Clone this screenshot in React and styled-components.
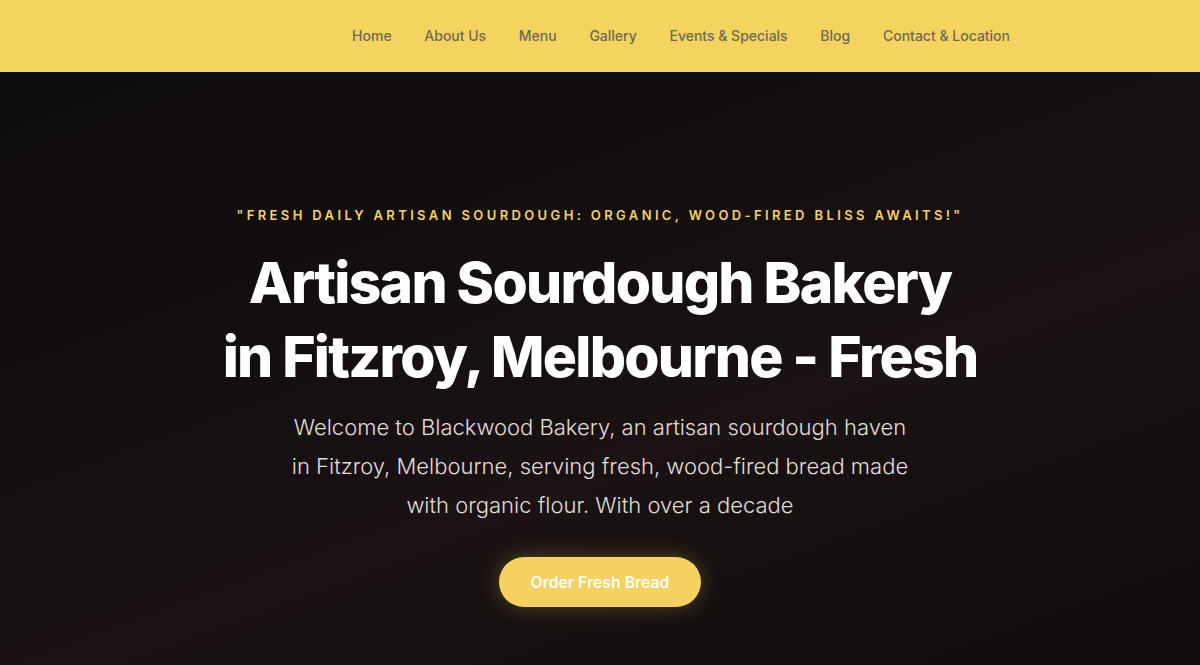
import React from 'react';
import styled, { createGlobalStyle } from 'styled-components';

const GlobalStyle = createGlobalStyle`
  * {
    box-sizing: border-box;
  }
  body {
    margin: 0;
    font-family: Inter, 'Noto Sans', sans-serif;
    background-color: #110d0d;
    -webkit-font-smoothing: antialiased;
  }
`;

const Header = styled.header`
  display: flex;
  justify-content: flex-end;
  align-items: center;
  height: 72px;
  padding-right: 190px;
  padding-bottom: 2px;
  background-color: #f5d35f;
`;

const Nav = styled.nav`
  display: flex;
  align-items: center;
  gap: 32.7px;
`;

const NavLink = styled.a`
  font-size: 14px;
  font-weight: 500;
  color: #6f6a55;
  text-decoration: none;
  cursor: pointer;
  &:hover {
    color: #2b2a25;
  }
`;

const Hero = styled.section`
  display: flex;
  flex-direction: column;
  align-items: center;
  min-height: 593px;
  padding-top: 133px;
  text-align: center;
  background: linear-gradient(
    160deg,
    #0f0c0c 0%,
    #140f0f 35%,
    #1a1213 60%,
    #140f0f 80%,
    #120e0e 100%
  );
`;

const Tagline = styled.p`
  margin: 0 0 21px;
  font-size: 13px;
  line-height: 20px;
  font-weight: 600;
  letter-spacing: 3.37px;
  text-transform: uppercase;
  color: #f5d35f;
`;

const Title = styled.h1`
  margin: 0;
  font-size: 57px;
  line-height: 74px;
  font-weight: 800;
  letter-spacing: -1.75px;
  color: #ffffff;
`;

const TitleLine = styled.span`
  display: block;
`;

const Lead = styled.p`
  max-width: 630px;
  margin: 14px 0 0;
  font-size: 22px;
  line-height: 39px;
  font-weight: 300;
  color: #e2dcd7;
`;

const OrderButton = styled.button`
  margin-top: 32px;
  width: 202px;
  height: 50px;
  border: none;
  border-radius: 25px;
  background-color: #f4d160;
  color: #ffffff;
  font-family: inherit;
  font-size: 15.8px;
  font-weight: 600;
  box-shadow: 0 0 22px rgba(245, 211, 95, 0.28);
  cursor: pointer;
  &:hover {
    background-color: #f7db7c;
  }
`;

const links = [
  'Home',
  'About Us',
  'Menu',
  'Gallery',
  'Events & Specials',
  'Blog',
  'Contact & Location',
];

const App = () => {
  return (
    <>
      <GlobalStyle />
      <Header>
        <Nav>
          {links.map((link) => (
            <NavLink key={link}>{link}</NavLink>
          ))}
        </Nav>
      </Header>
      <Hero>
        <Tagline>
          "Fresh Daily Artisan Sourdough: Organic, Wood-Fired Bliss Awaits!"
        </Tagline>
        <Title>
          <TitleLine>Artisan Sourdough Bakery</TitleLine>
          <TitleLine>in Fitzroy, Melbourne - Fresh</TitleLine>
        </Title>
        <Lead>
          Welcome to Blackwood Bakery, an artisan sourdough haven in Fitzroy,
          Melbourne, serving fresh, wood-fired bread made with organic flour.
          With over a decade
        </Lead>
        <OrderButton>Order Fresh Bread</OrderButton>
      </Hero>
    </>
  );
};

export default App;
